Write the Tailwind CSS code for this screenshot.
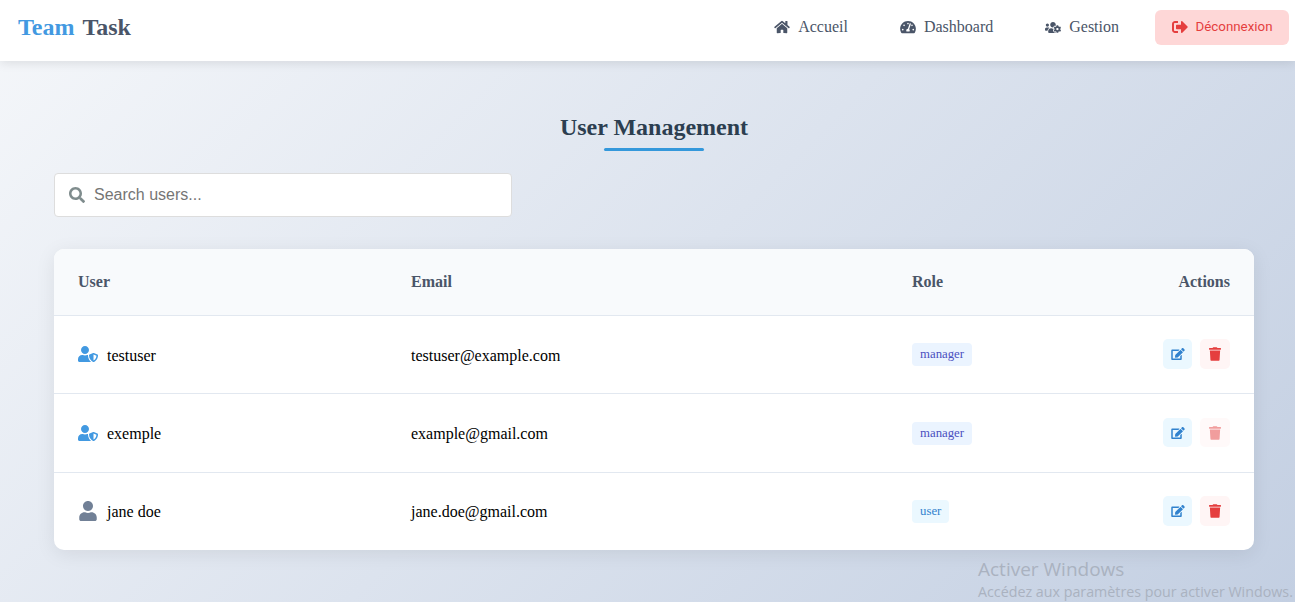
<!DOCTYPE html>
<html lang="en">
<head>
    <meta charset="UTF-8">
    <meta name="viewport" content="width=device-width, initial-scale=1.0">
    <title>Team Task - User Management</title>
    <script src="https://cdn.jsdelivr.net/npm/@tailwindcss/browser@4"></script>
</head>
<body class="relative h-[602px] overflow-hidden bg-linear-[135deg,#f5f7fa,#c3cfe2] font-['Liberation_Serif',serif]">
    <!-- Navbar -->
    <nav class="flex h-[61px] items-center justify-between bg-white pb-[7px] pl-[18px] pr-[6px] shadow-[0_2px_10px_rgba(0,0,0,0.1)]">
        <div class="flex gap-[8px] text-[24px] font-bold leading-none">
            <span class="text-[#4299e1]">Team</span>
            <span class="text-[#4a5568]">Task</span>
        </div>
        <div class="flex items-center text-[16px] text-[#4a5568]">
            <a class="mr-[52px] flex items-center gap-[8px]">
                <svg class="h-[14px] w-[16px] fill-current" viewBox="0 0 576 512"><path d="M280.37 148.26L96 300.11V464a16 16 0 0 0 16 16l112.06-.29a16 16 0 0 0 15.92-16V368a16 16 0 0 1 16-16h64a16 16 0 0 1 16 16v95.64a16 16 0 0 0 16 16.05L464 480a16 16 0 0 0 16-16V300L295.67 148.26a12.19 12.19 0 0 0-15.3 0zM571.6 251.47L488 182.56V44.05a12 12 0 0 0-12-12h-56a12 12 0 0 0-12 12v72.61L318.47 43a48 48 0 0 0-61 0L4.34 251.47a12 12 0 0 0-1.6 16.9l25.5 31A12 12 0 0 0 45.15 301l235.22-193.74a12.19 12.19 0 0 1 15.3 0L530.9 301a12 12 0 0 0 16.9-1.6l25.5-31a12 12 0 0 0-1.7-16.93z"/></svg>
                Accueil
            </a>
            <a class="mr-[52px] flex items-center gap-[8px]">
                <svg class="h-[14px] w-[16px] fill-current" viewBox="0 0 576 512"><path d="M288 32C128.94 32 0 160.94 0 320c0 52.8 14.25 102.26 39.06 144.8 5.61 9.62 16.3 15.2 27.44 15.2h443c11.14 0 21.83-5.58 27.44-15.2C561.75 422.26 576 372.8 576 320c0-159.06-128.94-288-288-288zm0 64c14.71 0 26.58 10.13 30.32 23.65-1.11 2.26-2.64 4.23-3.45 6.67l-9.22 27.67c-5.13 3.49-10.97 6.01-17.64 6.01-17.67 0-32-14.33-32-32S270.33 96 288 96zM96 384c-17.67 0-32-14.33-32-32s14.33-32 32-32 32 14.33 32 32-14.33 32-32 32zm48-160c-17.67 0-32-14.33-32-32s14.33-32 32-32 32 14.33 32 32-14.33 32-32 32zm246.77-72.41l-61.33 184C343.13 347.33 352 364.54 352 384c0 11.72-3.38 22.55-8.88 32H232.88c-5.5-9.45-8.88-20.28-8.88-32 0-33.94 26.5-61.43 59.9-63.59l61.34-184.01c4.17-12.56 17.73-19.45 30.36-15.17 12.57 4.19 19.35 17.79 15.17 30.36zm14.66 57.2l15.52-46.55c3.47-1.29 7.13-2.23 11.05-2.23 17.67 0 32 14.33 32 32s-14.33 32-32 32c-11.38-.01-20.89-6.28-26.57-15.22zM480 384c-17.67 0-32-14.33-32-32s14.33-32 32-32 32 14.33 32 32-14.33 32-32 32z"/></svg>
                Dashboard
            </a>
            <a class="mr-[36px] flex items-center gap-[8px]">
                <svg class="h-[13px] w-[16px] fill-current" viewBox="0 0 640 512"><path d="M610.5 341.3c2.6-14.1 2.6-28.5 0-42.6l25.8-14.9c3-1.7 4.3-5.2 3.3-8.5-6.7-21.6-18.2-41.2-33.2-57.4-2.3-2.5-6-3.1-9-1.4l-25.8 14.9c-10.9-9.3-23.4-16.5-36.9-21.3v-29.8c0-3.4-2.4-6.4-5.7-7.1-22.3-5-45-4.8-66.2 0-3.3.7-5.7 3.7-5.7 7.1v29.8c-13.5 4.8-26 12-36.9 21.3l-25.8-14.9c-2.9-1.7-6.7-1.1-9 1.4-15 16.2-26.5 35.8-33.2 57.4-1 3.3.4 6.8 3.3 8.5l25.8 14.9c-2.6 14.1-2.6 28.5 0 42.6l-25.8 14.9c-3 1.7-4.3 5.2-3.3 8.5 6.7 21.6 18.2 41.1 33.2 57.4 2.3 2.5 6 3.1 9 1.4l25.8-14.9c10.9 9.3 23.4 16.5 36.9 21.3v29.8c0 3.4 2.4 6.4 5.7 7.1 22.3 5 45 4.8 66.2 0 3.3-.7 5.7-3.7 5.7-7.1v-29.8c13.5-4.8 26-12 36.9-21.3l25.8 14.9c2.9 1.7 6.7 1.1 9-1.4 15-16.2 26.5-35.8 33.2-57.4 1-3.3-.4-6.8-3.3-8.5l-25.8-14.9zM496 368.5c-26.8 0-48.5-21.8-48.5-48.5s21.8-48.5 48.5-48.5 48.5 21.8 48.5 48.5-21.7 48.5-48.5 48.5zM96 224c35.3 0 64-28.7 64-64s-28.7-64-64-64-64 28.7-64 64 28.7 64 64 64zm224 32c1.9 0 3.7-.5 5.6-.6 8.3-21.7 20.5-42.1 36.3-59.2 7.4-8 17.9-12.6 28.9-12.6 6.9 0 13.7 1.8 19.6 5.3l7.9 4.6c.8-.5 1.6-.9 2.4-1.4 7-14.6 11.2-30.8 11.2-48 0-61.9-50.1-112-112-112S208 82.1 208 144c0 61.9 50.1 112 112 112zm105.2 194.5c-2.3-1.2-4.6-2.6-6.8-3.9-8.2 4.8-15.3 9.8-27.5 9.8-10.9 0-21.4-4.6-28.9-12.6-18.3-19.8-32.3-43.9-40.2-69.6-10.7-34.5 24.9-49.7 25.8-50.3-.1-2.6-.1-5.2 0-7.8l-7.9-4.6c-3.8-2.2-7-5-9.8-8.1-3.3.2-6.5.6-9.8.6-24.6 0-47.6-6-68.5-16h-8.3C179.6 288 128 339.6 128 403.2V432c0 26.5 21.5 48 48 48h255.4c-3.7-6-6.2-12.8-6.2-20.3v-9.2zM173.1 274.6C161.5 263.1 145.6 256 128 256H64c-35.3 0-64 28.7-64 64v32c0 17.7 14.3 32 32 32h65.9c6.3-47.4 34.9-87.3 75.2-109.4z"/></svg>
                Gestion
            </a>
            <button class="flex h-[35px] w-[134px] items-center justify-center gap-[8px] rounded-[6px] bg-[#fed7d7] font-['Roboto',sans-serif] text-[13.33px] text-[#e53e3e]">
                <svg class="size-[16px] fill-current" viewBox="0 0 512 512"><path d="M497 273L329 441c-15 15-41 4.5-41-17v-96H152c-13.3 0-24-10.7-24-24v-96c0-13.3 10.7-24 24-24h136V88c0-21.4 25.9-32 41-17l168 168c9.3 9.4 9.3 24.6 0 34zM192 436v-40c0-6.6-5.4-12-12-12H96c-17.7 0-32-14.3-32-32V160c0-17.7 14.3-32 32-32h84c6.6 0 12-5.4 12-12V76c0-6.6-5.4-12-12-12H96c-53 0-96 43-96 96v192c0 53 43 96 96 96h84c6.6 0 12-5.4 12-12z"/></svg>
                Déconnexion
            </button>
        </div>
    </nav>

    <main class="ml-[54px] w-[1200px]">
        <!-- Title -->
        <div class="flex flex-col items-center pt-[52px]">
            <h1 class="text-[24px] font-bold leading-[28px] text-[#2c3e50]">User Management</h1>
            <div class="mt-[7px] h-[3px] w-[100px] rounded-full bg-[#3498db]"></div>
        </div>

        <!-- Search -->
        <div class="mt-[22px] flex h-[44px] w-[458px] items-center gap-[9px] rounded-[4px] border border-[#dddddd] bg-white pl-[14px]">
            <svg class="h-[16px] w-[16px] fill-[#7f8c8d]" viewBox="0 0 512 512"><path d="M505 442.7L405.3 343c-4.5-4.5-10.6-7-17-7H372c27.6-35.3 44-79.7 44-128C416 93.1 322.9 0 208 0S0 93.1 0 208s93.1 208 208 208c48.3 0 92.7-16.4 128-44v16.3c0 6.4 2.5 12.5 7 17l99.7 99.7c9.4 9.4 24.6 9.4 33.9 0l28.3-28.3c9.4-9.4 9.4-24.6.1-34zM208 336c-70.7 0-128-57.2-128-128 0-70.7 57.2-128 128-128 70.7 0 128 57.2 128 128 0 70.7-57.2 128-128 128z"/></svg>
            <input type="text" placeholder="Search users..." class="flex-1 bg-transparent font-['Liberation_Sans',sans-serif] text-[16px] outline-none placeholder:text-[#757575]">
        </div>

        <!-- Users table -->
        <div class="mt-[32px] overflow-hidden rounded-[10px] bg-white shadow-[0_4px_20px_rgba(0,0,0,0.08)]">
            <table class="w-full table-fixed border-collapse text-left text-[16px]">
                <thead>
                    <tr class="h-[66px] border-b border-[#e2e8f0] bg-[#f8fafc] text-[#4a5568]">
                        <th class="w-[357px] pl-[24px] font-bold">User</th>
                        <th class="w-[501px] font-bold">Email</th>
                        <th class="font-bold">Role</th>
                        <th class="w-[100px] pr-[24px] text-right font-bold">Actions</th>
                    </tr>
                </thead>
                <tbody class="text-black">
                    <tr class="h-[78px] border-b border-[#e2e8f0]">
                        <td class="pl-[24px]">
                            <div class="flex items-center gap-[9px]">
                                <svg class="h-[16px] w-[20px] fill-[#4299e1]" viewBox="0 0 640 512"><path d="M622.3 271.1l-115.2-45c-4.1-1.6-12.6-3.7-22.2 0l-115.2 45c-10.7 4.2-17.7 14-17.7 24.9 0 111.6 68.7 188.8 132.9 213.9 9.6 3.7 18 1.6 22.2 0C558.4 489.9 640 420.5 640 296c0-10.9-7-20.7-17.7-24.9zM496 462.4V273.3l95.5 37.3c-5.6 87.1-60.9 135.4-95.5 151.8zM224 256c70.7 0 128-57.3 128-128S294.7 0 224 0 96 57.3 96 128s57.3 128 128 128zm96 40c0-2.5.8-4.8 1.1-7.2-2.5-.1-4.9-.8-7.5-.8h-16.7c-22.2 10.2-46.9 16-72.9 16s-50.6-5.8-72.9-16h-16.7C60.2 288 0 348.2 0 422.4V464c0 26.5 21.5 48 48 48h352c6.8 0 13.3-1.5 19.2-4-54-42.9-99.2-116.7-99.2-212z"/></svg>
                                <span class="pt-[4px]">testuser</span>
                            </div>
                        </td>
                        <td class="pt-[4px]">testuser@example.com</td>
                        <td><span class="inline-block -translate-y-px rounded-[4px] bg-[#ebf4ff] px-[8px] py-[4px] text-[12.8px] leading-[15px] text-[#4c51bf]">manager</span></td>
                        <td class="pr-[24px]">
                            <div class="flex justify-end gap-[8px]">
                                <button class="flex size-[29.6px] items-center justify-center rounded-[5px] bg-[#ebf8ff] text-[#3182ce]">
                                    <svg class="h-[12px] w-[14px] fill-current" viewBox="0 0 576 512"><path d="M402.6 83.2l90.2 90.2c3.8 3.8 3.8 10 0 13.8L274.4 405.6l-92.8 10.3c-12.4 1.4-22.9-9.1-21.5-21.5l10.3-92.8L388.8 83.2c3.8-3.8 10-3.8 13.8 0zm162-22.9l-48.8-48.8c-15.2-15.2-39.9-15.2-55.2 0l-35.4 35.4c-3.8 3.8-3.8 10 0 13.8l90.2 90.2c3.8 3.8 10 3.8 13.8 0l35.4-35.4c15.2-15.3 15.2-40 0-55.2zM384 346.2V448H64V128h229.8c3.2 0 6.2-1.3 8.5-3.5l40-40c7.6-7.6 2.2-20.5-8.5-20.5H48C21.5 64 0 85.5 0 112v352c0 26.5 21.5 48 48 48h352c26.5 0 48-21.5 48-48V306.2c0-10.7-12.9-16-20.5-8.5l-40 40c-2.2 2.3-3.5 5.3-3.5 8.5z"/></svg>
                                </button>
                                <button class="flex size-[29.6px] items-center justify-center rounded-[5px] bg-[#fff5f5] text-[#e53e3e]">
                                    <svg class="h-[14px] w-[12px] fill-current" viewBox="0 0 448 512"><path d="M432 32H312l-9.4-18.7A24 24 0 0 0 281.1 0H166.8a23.72 23.72 0 0 0-21.4 13.3L136 32H16A16 16 0 0 0 0 48v32a16 16 0 0 0 16 16h416a16 16 0 0 0 16-16V48a16 16 0 0 0-16-16zM53.2 467a48 48 0 0 0 47.9 45h245.8a48 48 0 0 0 47.9-45L416 128H32z"/></svg>
                                </button>
                            </div>
                        </td>
                    </tr>
                    <tr class="h-[79px] border-b border-[#e2e8f0]">
                        <td class="pl-[24px]">
                            <div class="flex items-center gap-[9px]">
                                <svg class="h-[16px] w-[20px] fill-[#4299e1]" viewBox="0 0 640 512"><path d="M622.3 271.1l-115.2-45c-4.1-1.6-12.6-3.7-22.2 0l-115.2 45c-10.7 4.2-17.7 14-17.7 24.9 0 111.6 68.7 188.8 132.9 213.9 9.6 3.7 18 1.6 22.2 0C558.4 489.9 640 420.5 640 296c0-10.9-7-20.7-17.7-24.9zM496 462.4V273.3l95.5 37.3c-5.6 87.1-60.9 135.4-95.5 151.8zM224 256c70.7 0 128-57.3 128-128S294.7 0 224 0 96 57.3 96 128s57.3 128 128 128zm96 40c0-2.5.8-4.8 1.1-7.2-2.5-.1-4.9-.8-7.5-.8h-16.7c-22.2 10.2-46.9 16-72.9 16s-50.6-5.8-72.9-16h-16.7C60.2 288 0 348.2 0 422.4V464c0 26.5 21.5 48 48 48h352c6.8 0 13.3-1.5 19.2-4-54-42.9-99.2-116.7-99.2-212z"/></svg>
                                <span class="pt-[2px]">exemple</span>
                            </div>
                        </td>
                        <td class="pt-[2px]">example@gmail.com</td>
                        <td><span class="inline-block rounded-[4px] bg-[#ebf4ff] px-[8px] py-[4px] text-[12.8px] leading-[15px] text-[#4c51bf]">manager</span></td>
                        <td class="pr-[24px]">
                            <div class="flex justify-end gap-[8px]">
                                <button class="flex size-[29.6px] items-center justify-center rounded-[5px] bg-[#ebf8ff] text-[#3182ce]">
                                    <svg class="h-[12px] w-[14px] fill-current" viewBox="0 0 576 512"><path d="M402.6 83.2l90.2 90.2c3.8 3.8 3.8 10 0 13.8L274.4 405.6l-92.8 10.3c-12.4 1.4-22.9-9.1-21.5-21.5l10.3-92.8L388.8 83.2c3.8-3.8 10-3.8 13.8 0zm162-22.9l-48.8-48.8c-15.2-15.2-39.9-15.2-55.2 0l-35.4 35.4c-3.8 3.8-3.8 10 0 13.8l90.2 90.2c3.8 3.8 10 3.8 13.8 0l35.4-35.4c15.2-15.3 15.2-40 0-55.2zM384 346.2V448H64V128h229.8c3.2 0 6.2-1.3 8.5-3.5l40-40c7.6-7.6 2.2-20.5-8.5-20.5H48C21.5 64 0 85.5 0 112v352c0 26.5 21.5 48 48 48h352c26.5 0 48-21.5 48-48V306.2c0-10.7-12.9-16-20.5-8.5l-40 40c-2.2 2.3-3.5 5.3-3.5 8.5z"/></svg>
                                </button>
                                <button disabled class="flex size-[29.6px] items-center justify-center rounded-[5px] bg-[#fff5f5] text-[#e53e3e] opacity-50">
                                    <svg class="h-[14px] w-[12px] fill-current" viewBox="0 0 448 512"><path d="M432 32H312l-9.4-18.7A24 24 0 0 0 281.1 0H166.8a23.72 23.72 0 0 0-21.4 13.3L136 32H16A16 16 0 0 0 0 48v32a16 16 0 0 0 16 16h416a16 16 0 0 0 16-16V48a16 16 0 0 0-16-16zM53.2 467a48 48 0 0 0 47.9 45h245.8a48 48 0 0 0 47.9-45L416 128H32z"/></svg>
                                </button>
                            </div>
                        </td>
                    </tr>
                    <tr class="h-[78px]">
                        <td class="pl-[24px]">
                            <div class="flex items-center gap-[9px]">
                                <svg class="h-[20px] w-[20px] fill-[#718096]" viewBox="0 0 448 512"><path d="M224 256c70.7 0 128-57.3 128-128S294.7 0 224 0 96 57.3 96 128s57.3 128 128 128zm89.6 32h-16.7c-22.2 10.2-46.9 16-72.9 16s-50.6-5.8-72.9-16h-16.7C60.2 288 0 348.2 0 422.4V464c0 26.5 21.5 48 48 48h352c26.5 0 48-21.5 48-48v-41.6c0-74.2-60.2-134.4-134.4-134.4z"/></svg>
                                <span class="pt-[2px]">jane doe</span>
                            </div>
                        </td>
                        <td class="pt-[2px]">jane.doe@gmail.com</td>
                        <td><span class="inline-block -translate-y-px rounded-[4px] bg-[#ebf8ff] px-[8px] py-[4px] text-[12.8px] leading-[15px] text-[#3182ce]">user</span></td>
                        <td class="pr-[24px]">
                            <div class="flex justify-end gap-[8px]">
                                <button class="flex size-[29.6px] items-center justify-center rounded-[5px] bg-[#ebf8ff] text-[#3182ce]">
                                    <svg class="h-[12px] w-[14px] fill-current" viewBox="0 0 576 512"><path d="M402.6 83.2l90.2 90.2c3.8 3.8 3.8 10 0 13.8L274.4 405.6l-92.8 10.3c-12.4 1.4-22.9-9.1-21.5-21.5l10.3-92.8L388.8 83.2c3.8-3.8 10-3.8 13.8 0zm162-22.9l-48.8-48.8c-15.2-15.2-39.9-15.2-55.2 0l-35.4 35.4c-3.8 3.8-3.8 10 0 13.8l90.2 90.2c3.8 3.8 10 3.8 13.8 0l35.4-35.4c15.2-15.3 15.2-40 0-55.2zM384 346.2V448H64V128h229.8c3.2 0 6.2-1.3 8.5-3.5l40-40c7.6-7.6 2.2-20.5-8.5-20.5H48C21.5 64 0 85.5 0 112v352c0 26.5 21.5 48 48 48h352c26.5 0 48-21.5 48-48V306.2c0-10.7-12.9-16-20.5-8.5l-40 40c-2.2 2.3-3.5 5.3-3.5 8.5z"/></svg>
                                </button>
                                <button class="flex size-[29.6px] items-center justify-center rounded-[5px] bg-[#fff5f5] text-[#e53e3e]">
                                    <svg class="h-[14px] w-[12px] fill-current" viewBox="0 0 448 512"><path d="M432 32H312l-9.4-18.7A24 24 0 0 0 281.1 0H166.8a23.72 23.72 0 0 0-21.4 13.3L136 32H16A16 16 0 0 0 0 48v32a16 16 0 0 0 16 16h416a16 16 0 0 0 16-16V48a16 16 0 0 0-16-16zM53.2 467a48 48 0 0 0 47.9 45h245.8a48 48 0 0 0 47.9-45L416 128H32z"/></svg>
                                </button>
                            </div>
                        </td>
                    </tr>
                </tbody>
            </table>
        </div>
    </main>

    <!-- Windows watermark -->
    <div class="absolute left-[978px] top-[557px] font-['Open_Sans',sans-serif] text-[#aab2c0]">
        <div class="text-[19px] leading-[24px]">Activer Windows</div>
        <div class="whitespace-nowrap text-[14.27px] leading-[22px]">Accédez aux paramètres pour activer Windows.</div>
    </div>
</body>
</html>
